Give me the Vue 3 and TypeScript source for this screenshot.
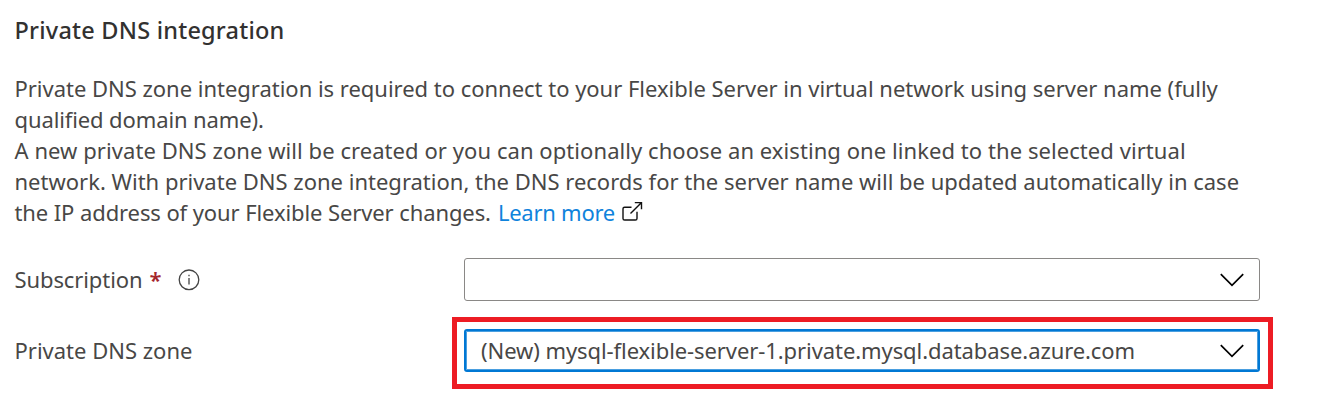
<script setup lang="ts">
const paragraphs: { id: string; text: string }[] = [
  { id: 'l1', text: 'Private DNS zone integration is required to connect to your Flexible Server in virtual network using server name (fully' },
  { id: 'l2', text: 'qualified domain name).' },
  { id: 'l3', text: 'A new private DNS zone will be created or you can optionally choose an existing one linked to the selected virtual' },
  { id: 'l4', text: 'network. With private DNS zone integration, the DNS records for the server name will be updated automatically in case' },
]
const zone = '(New) mysql-flexible-server-1.private.mysql.database.azure.com'
</script>

<template>
  <main class="panel">
    <h2 class="title"><span>Private DNS integration</span></h2>
    <div class="description">
      <div v-for="p in paragraphs" :key="p.id" class="line"><span :class="p.id">{{ p.text }}</span></div>
      <div class="line last">
        <span class="l5">the IP address of your Flexible Server changes.</span>
        <a class="link">Learn more</a>
        <svg class="external" width="22" height="22" viewBox="0 0 22 22" fill="none" stroke="#111" stroke-width="1.4">
          <path d="M10.5 6.2H3.6Q2 6.2 2 7.8V17.4Q2 19 3.6 19H14.4Q16 19 16 17.4V10.8" />
          <path d="M9.5 12.5L20.3 1.8M13.8 1.6H20.5V8.3" />
        </svg>
      </div>
    </div>

    <div class="row first">
      <label class="label"><span class="sub">Subscription</span><span class="required">*</span>
        <svg class="info" width="22" height="22" viewBox="0 0 22 22" fill="none" stroke="#444" stroke-width="1.3">
          <circle cx="11" cy="10.8" r="9.8" />
          <path d="M11 9V15.6M11 5.8V7.3" />
        </svg>
      </label>
      <div class="select">
        <svg class="chevron" width="26" height="16" viewBox="0 0 26 16" fill="none" stroke="#000" stroke-width="1.7"><path d="M1.8 2.2L13 13.4L24.2 2.2" /></svg>
      </div>
    </div>

    <div class="row second">
      <label class="label"><span class="zone-label">Private DNS zone</span></label>
      <div class="highlight">
        <div class="select focused">
          <span class="value">{{ zone }}</span>
          <svg class="chevron" width="26" height="16" viewBox="0 0 26 16" fill="none" stroke="#000" stroke-width="1.7"><path d="M1.8 2.2L13 13.4L24.2 2.2" /></svg>
        </div>
      </div>
    </div>
  </main>
</template>

<style>
body { background: #fff; }
</style>

<style scoped>
.panel {
  box-sizing: border-box;
  width: 1338px;
  height: 411px;
  padding: 15px 0 0 14.5px;
  overflow: hidden;
  color: #484746;
  font: 400 22px/31px "Noto Sans", "Open Sans", sans-serif;
}
.title { margin: 0; font-size: 23.5px; font-weight: 550; line-height: 31px; letter-spacing: 0.22px; color: #323130; }
.description { margin-top: 27px; white-space: nowrap; }
.line { height: 31px; }
.l1 { letter-spacing: -0.02px; }
.l2 { letter-spacing: -0.11px; }
.l3 { letter-spacing: 0.065px; }
.l5 { letter-spacing: -0.1px; }
.last { display: flex; }
.link { margin-left: 7px; color: #0f83dc; letter-spacing: -0.25px; }
.external { margin: 4px 0 0 6px; }
.row { display: flex; align-items: center; }
.first { margin-top: 30px; height: 43px; }
.second { margin-top: 16px; height: 72px; }
.label { display: flex; align-items: center; width: 449.5px; flex: none; white-space: nowrap; }
.second .label { width: 437.5px; margin-bottom: 5px; }
.sub { letter-spacing: -0.1px; }
.required { margin-left: 7px; color: #a4262c; font-weight: 600; }
.info { margin-left: 17px; }
.select {
  box-sizing: border-box;
  display: flex;
  align-items: center;
  width: 796px;
  height: 43px;
  padding: 0 14px 0 16px;
  border: 1px solid #8a8886;
  border-radius: 3px;
  background: #fff;
}
.chevron { margin-left: auto; flex: none; }
.highlight { box-sizing: border-box; width: 821px; height: 72px; padding: 7px; border: 5px solid #ed1c24; }
.focused { border: 2px solid #0078d4; box-shadow: inset 0 0 0 1px #4a9fe0; padding: 0 13px 0 15px; }
.value { white-space: nowrap; letter-spacing: -0.08px; }
</style>
